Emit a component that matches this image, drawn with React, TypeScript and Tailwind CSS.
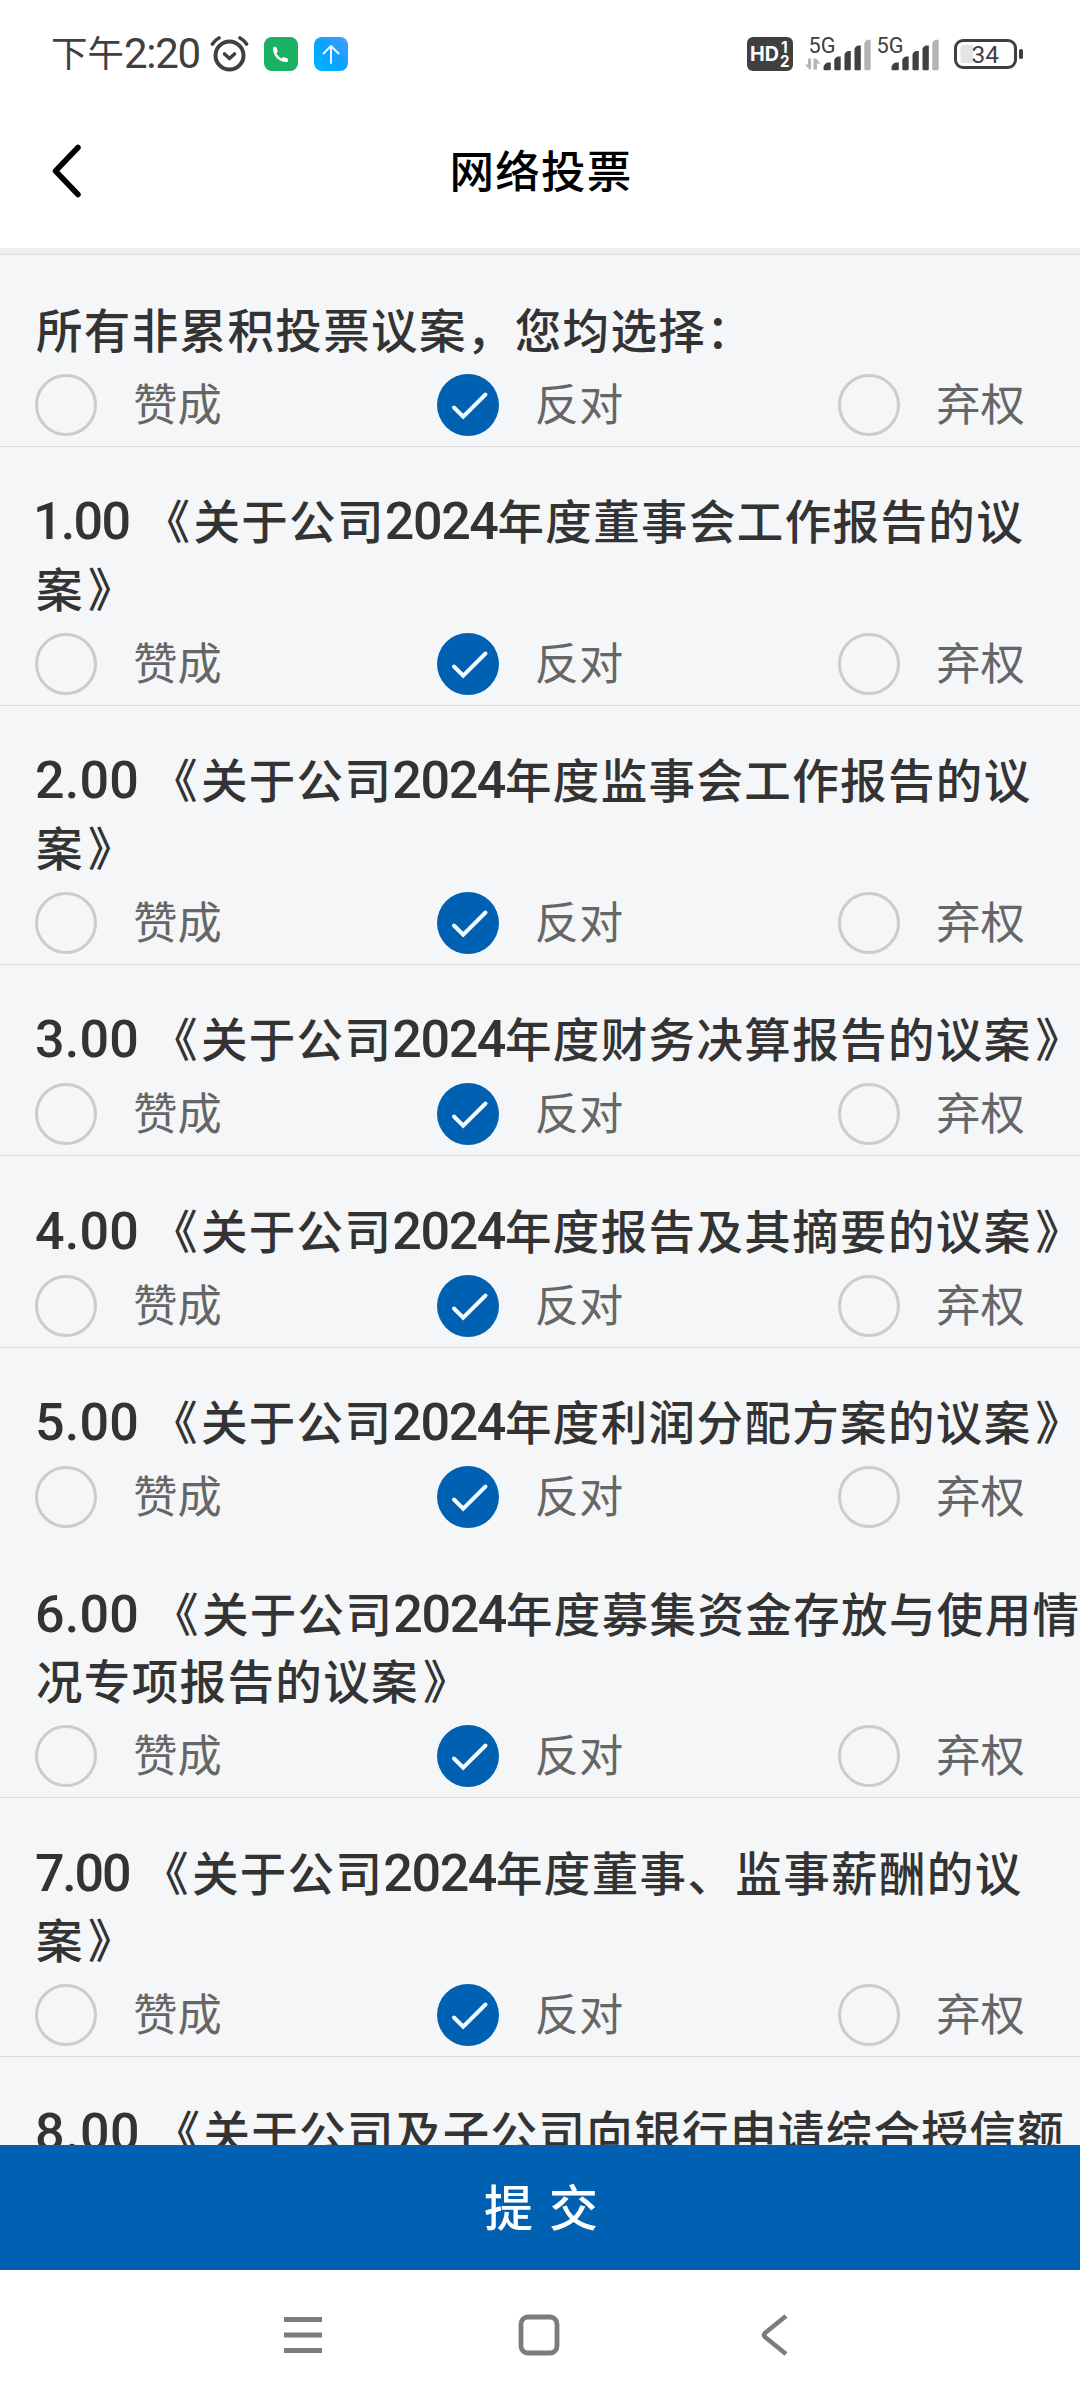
import React, { useState } from 'react';

type Choice = 'for' | 'against' | 'abstain';

interface Proposal {
  id: string;
  lines: string[];
  no?: string;
  noClass?: string;
  divider?: boolean;
}

const OPTIONS: { value: Choice; label: string }[] = [
  { value: 'for', label: '赞成' },
  { value: 'against', label: '反对' },
  { value: 'abstain', label: '弃权' },
];

const PROPOSALS: Proposal[] = [
  { id: 'all', lines: ['所有非累积投票议案，您均选择：'] },
  { id: 'p1', no: '1.00', noClass: 'w-[112.500px] -ml-[3px] tracking-[-1.700px]', lines: ['《关于公司2024年度董事会工作报告的议', '案》'] },
  { id: 'p2', no: '2.00', noClass: 'w-[118px] -ml-px tracking-[0.200px]', lines: ['《关于公司2024年度监事会工作报告的议', '案》'] },
  { id: 'p3', no: '3.00', noClass: 'w-[118px] -ml-px tracking-[0.200px]', lines: ['《关于公司2024年度财务决算报告的议案》'] },
  { id: 'p4', no: '4.00', noClass: 'w-[118px] -ml-px tracking-[0.200px]', lines: ['《关于公司2024年度报告及其摘要的议案》'] },
  { id: 'p5', no: '5.00', noClass: 'w-[118px] -ml-px tracking-[0.200px]', lines: ['《关于公司2024年度利润分配方案的议案》'], divider: false },
  { id: 'p6', no: '6.00', noClass: 'w-[119px] -ml-px tracking-[0.200px]', lines: ['《关于公司2024年度募集资金存放与使用情', '况专项报告的议案》'] },
  { id: 'p7', no: '7.00', noClass: 'w-[109px] -ml-px tracking-[-2.200px]', lines: ['《关于公司2024年度董事、监事薪酬的议', '案》'] },
  { id: 'p8', no: '8.00', noClass: 'w-[120.500px] -ml-px tracking-[0.500px]', lines: ['《关于公司及子公司向银行申请综合授信额', '度的议案》'] },
];

const AlarmIcon = () => (
  <svg width="40" height="36" viewBox="0 0 40 36" fill="none" stroke="#404040" strokeWidth="4" strokeLinecap="round" strokeLinejoin="round">
    <circle cx="19.5" cy="19.5" r="14" />
    <path d="M14.500 18l5 4.500 5-4.500" strokeWidth="3.600" />
    <path d="M2.500 8q2.500-4 6.500-6M36.500 8q-2.500-4-6.500-6" strokeWidth="3.600" />
  </svg>
);

const PhoneBadge = () => (
  <svg width="34" height="34" viewBox="0 0 34 34">
    <rect width="34" height="34" rx="8" fill="#1bb163" />
    <path d="M9 11.500c0-1 .8-1.800 2-1.800 1 0 1.500.6 1.900 1.800l.7 2.300c.2.900-.1 1.400-1.300 2.400 1.200 2.300 3 4 5.300 5.300 1-1.200 1.500-1.500 2.400-1.300l2.300.7c1.200.4 1.700.9 1.700 1.900v1c0 .9-.6 1.200-1.600 1.200C14.500 25 9 18.500 9 11.500z" fill="#fff" />
  </svg>
);

const UploadBadge = () => (
  <svg width="34" height="34" viewBox="0 0 34 34">
    <defs>
      <linearGradient id="upload" x1="0" y1="1" x2="1" y2="0">
        <stop offset="0" stopColor="#00b7ff" />
        <stop offset="0.5" stopColor="#0aa2ff" />
        <stop offset="1" stopColor="#4b9cff" />
      </linearGradient>
    </defs>
    <rect width="34" height="34" rx="8" fill="url(#upload)" />
    <path d="M17 26V9M9.500 16.500L17 9l7.500 7.500" fill="none" stroke="#fff" strokeWidth="1.800" strokeLinecap="round" strokeLinejoin="round" />
  </svg>
);

const HdBadge = () => (
  <svg width="46" height="34" viewBox="0 0 46 34" className="overflow-visible font-['Inter','Liberation_Sans',sans-serif] font-bold">
    <rect width="46" height="34" rx="6" fill="#404040" />
    <text x="3" y="24" fontSize="19.500" fill="#fff" textLength="29" lengthAdjust="spacingAndGlyphs">HD</text>
    <text x="34" y="15.500" fontSize="15.500" fill="#fff">1</text>
    <text x="33" y="30" fontSize="15.500" fill="#fff" textLength="9.500" lengthAdjust="spacingAndGlyphs">2</text>
  </svg>
);

const Signal: React.FC<{ data?: boolean }> = ({ data }) => (
  <svg width="68" height="36" viewBox="0 0 68 36" className="overflow-visible font-['Roboto','Liberation_Sans',sans-serif]">
    <text x="3.500" y="16.500" fontSize="21.500" fill="#404040" textLength="27" lengthAdjust="spacingAndGlyphs">5G</text>
    {data && <path d="M3 22.500h3v11H4.500L0 28.500h3zM8.500 33.500v-11H11l4.500 5H12v6z" fill="#b4b4b4" />}
    <g fill="#404040">
      <path d="M18.500 33v-1.500q0-3 4-5h3.300V33q0 1.200-1.200 1.200h-5q-1.100 0-1.100-1.200z" />
      <path d="M29.300 33v-8.500q0-2.500 3.500-4h2.900V33q0 1.200-1.200 1.200h-4q-1.200 0-1.200-1.200z" />
      <path d="M39.500 33V19q0-2.500 3.500-4h2.800v18q0 1.200-1.200 1.200h-4q-1.100 0-1.100-1.200z" />
      <path d="M49.500 33V13.500q0-2.500 3.500-4h2.800V33q0 1.200-1.200 1.200h-4q-1.100 0-1.100-1.200z" />
    </g>
    <path d="M59.300 33V8q0-2.700 3.500-4.300h2.900V33q0 1.200-1.200 1.200h-4q-1.200 0-1.200-1.200z" fill="#b4b4b4" />
  </svg>
);

const Battery = () => (
  <svg width="70" height="30" viewBox="0 0 70 30" className="font-['Roboto','Liberation_Sans',sans-serif]">
    <rect x="1.500" y="1.500" width="60" height="27" rx="7.500" fill="none" stroke="#404040" strokeWidth="3" />
    <path d="M19 6H9.500Q6.500 6 6.500 9v12q0 3 3 3H19z" fill="#e4e4e4" />
    <rect x="65" y="10" width="4" height="10" rx="1.800" fill="#404040" />
    <text x="17.500" y="24" fontSize="24.500" fill="#404040" textLength="27.500" lengthAdjust="spacingAndGlyphs">34</text>
  </svg>
);

const StatusBar = () => (
  <div className="flex h-[107px] items-center pl-[51px] pr-[56px] text-[#404040]">
    <div className="flex h-[48px] w-[159px] items-center whitespace-nowrap">
      <span className="pb-[2px] text-[36.500px] leading-none">下午</span>
      <span className="font-['Roboto','Noto_Sans_CJK_SC',sans-serif] text-[42px] leading-none tracking-[-1.300px]">2:20</span>
    </div>
    <AlarmIcon />
    <div className="ml-[14px] flex gap-4">
      <PhoneBadge />
      <UploadBadge />
    </div>
    <div className="ml-auto flex items-center">
      <HdBadge />
      <div className="ml-[11.500px] flex">
        <Signal data />
        <Signal />
      </div>
      <div className="ml-[13.500px]">
        <Battery />
      </div>
    </div>
  </div>
);

const Header = () => (
  <div className="grid h-[141px] grid-cols-[200px_1fr_200px] items-center pb-[13px]">
    <button className="pl-[52px]">
      <svg width="30" height="54" viewBox="0 0 30 54" fill="none" stroke="#000" strokeWidth="5.500" strokeLinecap="round" strokeLinejoin="round">
        <path d="M26 3.500L3.500 27 26 50.500" />
      </svg>
    </button>
    <h1 className="pb-1 pl-[2px] text-center text-[44.500px] leading-none font-medium tracking-[1.200px] text-black">网络投票</h1>
  </div>
);

const Radio: React.FC<{ checked: boolean }> = ({ checked }) => (
  <svg width="62" height="62" viewBox="0 0 62 62" fill="none">
    {checked ? (
      <>
        <circle cx="31" cy="31" r="31" fill="#0060b2" />
        <path d="M17 33.500l9.200 9.200L48.500 20.500" stroke="#f2fbff" strokeWidth="4" strokeLinecap="round" />
      </>
    ) : (
      <circle cx="31" cy="31" r="29.500" stroke="#ccc" strokeWidth="3" />
    )}
  </svg>
);

// digits are set a little larger than the Chinese glyphs around them,
// and the book title marks sit slightly away from the text they enclose
const TitleText: React.FC<{ text: string }> = ({ text }) => (
  <>
    {text.split(/(\d+|[《》])/).map((part, i) => {
      if (/\d/.test(part)) {
        return <span key={i} className="font-['Roboto',sans-serif] text-[52px] leading-none tracking-[-1.400px]">{part}</span>;
      }
      if (part === '《') return <span key={i} className="-ml-[2px] mr-[2px]">{part}</span>;
      if (part === '》') return <span key={i} className="ml-[4px]">{part}</span>;
      return part;
    })}
  </>
);

interface ProposalRowProps {
  proposal: Proposal;
  value: Choice;
  onChange: (value: Choice) => void;
}

const ProposalRow: React.FC<ProposalRowProps> = ({ proposal, value, onChange }) => (
  <section className={`border-b pt-[38.500px] pb-[10px] ${proposal.divider === false ? 'border-transparent' : 'border-[#dadcde]'}`}>
    <div className="pl-[36px] text-[46.500px] font-medium tracking-[1.370px] whitespace-nowrap text-[#333]">
      {proposal.lines.map((line, i) => (
        <p key={line} className="flex h-[67.500px] items-baseline leading-[67.500px]">
          {i === 0 && proposal.no && (
            <span className={`shrink-0 font-['Roboto',sans-serif] text-[52px] leading-none ${proposal.noClass}`}>{proposal.no}</span>
          )}
          <span><TitleText text={line} /></span>
        </p>
      ))}
    </div>
    <div className="mt-[12.500px] flex pl-[35.300px]">
      {OPTIONS.map((option) => (
        <button key={option.value} onClick={() => onChange(option.value)} className="flex w-[401.500px] shrink-0 items-center gap-[36px]">
          <Radio checked={value === option.value} />
          <span className="pb-[6px] text-[44.200px] leading-[56px] text-[#666]">{option.label}</span>
        </button>
      ))}
    </div>
  </section>
);

const NavBar = () => (
  <div className="flex h-[130px] items-center justify-center gap-[195px] pr-[2px]">
    <svg width="40" height="42" viewBox="0 0 40 42" stroke="#7c7c7c" strokeWidth="5">
      <path d="M1 5.500h38M1 21h38M1 36.500h38" />
    </svg>
    <svg width="42" height="42" viewBox="0 0 42 42" fill="none" stroke="#7c7c7c" strokeWidth="4.800">
      <rect x="3" y="3" width="36" height="36" rx="7" />
    </svg>
    <svg width="40" height="42" viewBox="0 0 40 42" fill="none" stroke="#7c7c7c" strokeWidth="4.500" strokeLinejoin="round">
      <path d="M31 2L10 19q-2 2 0 4l21 17" />
    </svg>
  </div>
);

export default function App() {
  const [votes, setVotes] = useState<Record<string, Choice>>({});

  const vote = (id: string, value: Choice) => {
    if (id === 'all') {
      setVotes(Object.fromEntries(PROPOSALS.map((p) => [p.id, value])));
      return;
    }
    setVotes((prev) => ({ ...prev, [id]: value }));
  };

  return (
    <div className="flex h-[2400px] w-[1080px] flex-col overflow-hidden bg-white font-['Noto_Sans_CJK_SC',sans-serif]">
      <StatusBar />
      <Header />
      <main className="h-[1897px] overflow-hidden border-t-[6px] border-[#eee] bg-[#f4f6f8]">
        <div className="border-t border-[#dadcde]">
          {PROPOSALS.map((proposal) => (
            <ProposalRow
              key={proposal.id}
              proposal={proposal}
              value={votes[proposal.id] ?? 'against'}
              onChange={(value) => vote(proposal.id, value)}
            />
          ))}
        </div>
      </main>
      <button className="flex h-[125px] items-center justify-center gap-[16px] bg-[#0060b2] pb-[6px] pl-[2px] text-[49px] leading-none font-medium text-white">
        <span>提</span>
        <span>交</span>
      </button>
      <NavBar />
    </div>
  );
}
